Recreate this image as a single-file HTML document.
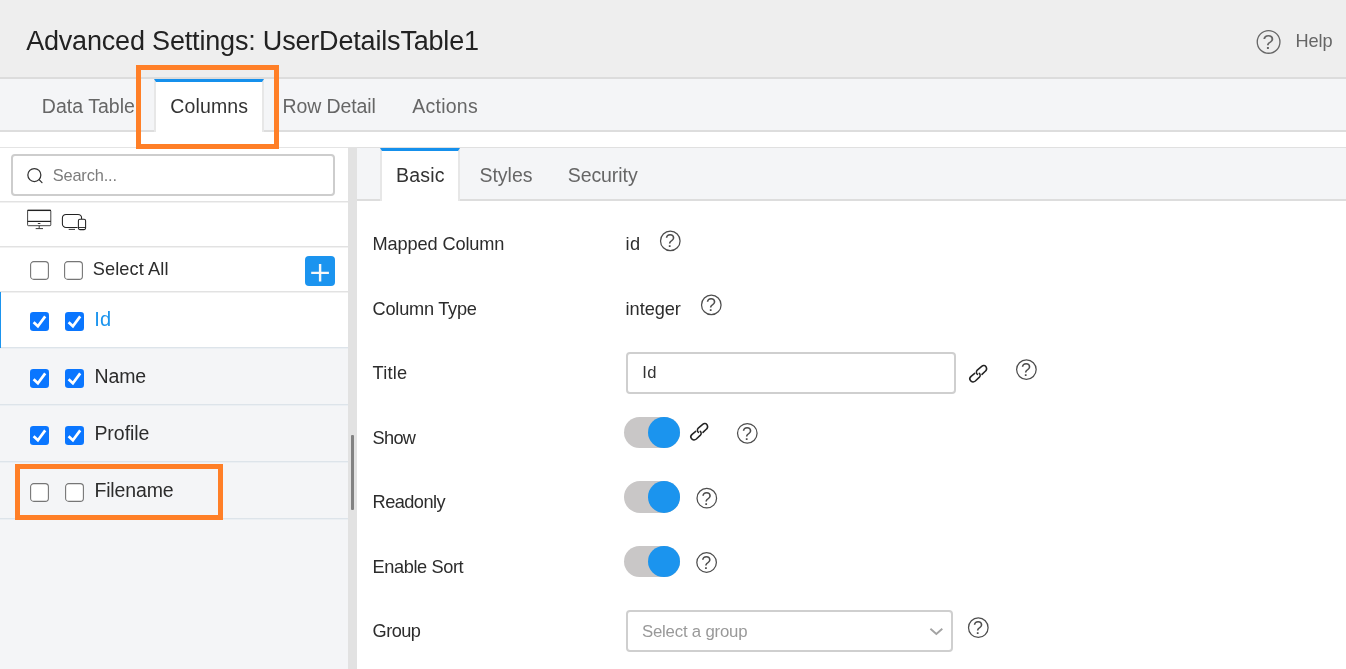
<!DOCTYPE html>
<html lang="en"><head><meta charset="utf-8"><title>Advanced Settings: UserDetailsTable1</title>
<style>
html,body{margin:0;padding:0}
body{width:1346px;height:669px;position:relative;overflow:hidden;background:#fff;
 font-family:"Liberation Sans",sans-serif;}
.t{position:absolute;white-space:nowrap;display:block;will-change:transform}
.a{position:absolute;display:block;overflow:visible}
.hdr{position:absolute;left:0;top:0;width:1346px;height:77px;background:#eeeeee;border-bottom:2px solid #dcdcdc}
.tabbar{position:absolute;left:0;top:79px;width:1346px;height:51px;background:#f4f5f7;border-bottom:2px solid #dddddd}
.tab-active{position:absolute;box-sizing:border-box;background:#fff;border-top:3px solid #1590ec;border-left:2px solid #e7e7e7;border-right:2px solid #e7e7e7}
.lp{position:absolute;left:0;top:147px;width:348px;height:522px;background:#f4f5f7;border-top:1px solid #e4e4e4;box-sizing:border-box}
.lp-white{position:absolute;left:0;width:348px;background:#fff}
.hl{position:absolute;left:0;width:348px;height:2px;background:linear-gradient(#dde4ea 0,#dde4ea 50%,#ebeff3 50%,#ebeff3 100%)}
.hl.g{background:linear-gradient(#e2e2e2 0,#e2e2e2 50%,#f1f1f1 50%,#f1f1f1 100%)}
.idmark{position:absolute;left:0;top:292px;width:1px;height:56px;background:#1b94ee}
.search{position:absolute;left:11px;top:154px;width:323.5px;height:41.5px;box-sizing:border-box;border:2px solid #cdcdcd;border-radius:4px;background:#fff}
.split{position:absolute;left:348px;top:147px;width:9px;height:522px;background:#e2e2e2}
.thumb{position:absolute;left:351px;top:435px;width:3px;height:75px;background:#828282;border-radius:1px}
.rp-tabbar{position:absolute;left:357px;top:147px;width:989px;height:54px;box-sizing:border-box;background:#f4f5f7;border-top:1px solid #e0e0e0;border-bottom:2px solid #dddddd}
.inp{position:absolute;box-sizing:border-box;border:2px solid #cfcfcf;border-radius:4px;background:#fff}
.plus{position:absolute;left:305px;top:256px;width:30px;height:30px;border-radius:4px;background:#1b94ef}
.trk{position:absolute;left:623.7px;width:56.5px;height:31.8px;border-radius:16px;background:#c9c7c7}
.knob{position:absolute;left:648px;width:32.2px;height:31.8px;border-radius:50%;background:#1b94ee}
.ob{position:absolute;box-sizing:border-box;border:5px solid #ff7f27}
</style></head>
<body>
<div class="hdr"></div>
<div class="tabbar"></div>
<div class="tab-active" style="left:154px;top:79px;width:110px;height:53px"></div>
<div class="lp"></div>
<div class="lp-white" style="top:148px;height:200px"></div>
<div class="hl g" style="top:201px"></div>
<div class="hl g" style="top:246px"></div>
<div class="hl g" style="top:291px"></div>
<div class="hl" style="top:347px"></div>
<div class="hl" style="top:404px"></div>
<div class="hl" style="top:461px"></div>
<div class="hl" style="top:518px"></div>
<div class="idmark"></div>
<div class="search"></div>
<div class="split"></div><div class="thumb"></div>
<div class="rp-tabbar"></div>
<div class="tab-active" style="left:380px;top:148px;width:80px;height:53px"></div>
<span class="t" style="left:26px;padding-left:0.13px;top:28px;font-size:27px;line-height:27px;letter-spacing:-0.181px;color:#222;">Advanced Settings: UserDetailsTable1</span>
<span class="t" style="left:1295px;padding-left:0.54px;top:32px;font-size:18.2px;line-height:18.2px;letter-spacing:-0.139px;color:#666;">Help</span>
<span class="t" style="left:41px;padding-left:0.84px;top:97px;font-size:19.5px;line-height:19.5px;letter-spacing:0.013px;color:#666;">Data Table</span>
<span class="t" style="left:170px;padding-left:0.22px;top:97px;font-size:19.5px;line-height:19.5px;letter-spacing:0.155px;color:#333;">Columns</span>
<span class="t" style="left:282px;padding-left:0.44px;top:97px;font-size:19.5px;line-height:19.5px;letter-spacing:-0.090px;color:#666;">Row Detail</span>
<span class="t" style="left:412px;padding-left:0.25px;top:97px;font-size:19.5px;line-height:19.5px;letter-spacing:0.245px;color:#666;">Actions</span>
<span class="t" style="left:52px;padding-left:0.66px;top:167px;font-size:16.4px;line-height:16.4px;letter-spacing:-0.153px;color:#7c7c7c;">Search...</span>
<span class="t" style="left:92px;padding-left:0.78px;top:260px;font-size:18.2px;line-height:18.2px;letter-spacing:0.095px;color:#2c2c2c;">Select All</span>
<span class="t" style="left:94px;padding-left:0.30px;top:309px;font-size:20px;line-height:20px;letter-spacing:0.100px;color:#1b94ee;">Id</span>
<span class="t" style="left:94px;padding-left:0.40px;top:367px;font-size:19.5px;line-height:19.5px;letter-spacing:-0.096px;color:#2c2c2c;">Name</span>
<span class="t" style="left:94px;padding-left:0.40px;top:424px;font-size:19.5px;line-height:19.5px;letter-spacing:-0.034px;color:#2c2c2c;">Profile</span>
<span class="t" style="left:94px;padding-left:0.40px;top:481px;font-size:19.5px;line-height:19.5px;letter-spacing:-0.138px;color:#2c2c2c;">Filename</span>
<span class="t" style="left:396px;padding-left:0.04px;top:166px;font-size:19.5px;line-height:19.5px;letter-spacing:0.192px;color:#333;">Basic</span>
<span class="t" style="left:479px;padding-left:0.42px;top:166px;font-size:19.5px;line-height:19.5px;letter-spacing:0.014px;color:#666;">Styles</span>
<span class="t" style="left:567px;padding-left:0.72px;top:166px;font-size:19.5px;line-height:19.5px;letter-spacing:-0.074px;color:#666;">Security</span>
<span class="t" style="left:372px;padding-left:0.60px;top:235px;font-size:18.2px;line-height:18.2px;letter-spacing:-0.134px;color:#2c2c2c;">Mapped Column</span>
<span class="t" style="left:372px;padding-left:0.60px;top:300px;font-size:18.2px;line-height:18.2px;letter-spacing:-0.251px;color:#2c2c2c;">Column Type</span>
<span class="t" style="left:372px;padding-left:0.60px;top:364px;font-size:18.2px;line-height:18.2px;letter-spacing:0.201px;color:#2c2c2c;">Title</span>
<span class="t" style="left:372px;padding-left:0.60px;top:429px;font-size:18.2px;line-height:18.2px;letter-spacing:-0.730px;color:#2c2c2c;">Show</span>
<span class="t" style="left:372px;padding-left:0.60px;top:493px;font-size:18.2px;line-height:18.2px;letter-spacing:-0.550px;color:#2c2c2c;">Readonly</span>
<span class="t" style="left:372px;padding-left:0.60px;top:558px;font-size:18.2px;line-height:18.2px;letter-spacing:-0.400px;color:#2c2c2c;">Enable Sort</span>
<span class="t" style="left:372px;padding-left:0.60px;top:622px;font-size:18.2px;line-height:18.2px;letter-spacing:-0.556px;color:#2c2c2c;">Group</span>
<span class="t" style="left:625px;padding-left:0.60px;top:235px;font-size:18.2px;line-height:18.2px;letter-spacing:0.400px;color:#2c2c2c;">id</span>
<span class="t" style="left:625px;padding-left:0.60px;top:300px;font-size:18.2px;line-height:18.2px;letter-spacing:-0.046px;color:#2c2c2c;">integer</span>
<div class="inp" style="left:626px;top:352px;width:330px;height:42px"></div>
<span class="t" style="left:642px;padding-left:0.26px;top:365px;font-size:16.6px;line-height:16.6px;letter-spacing:0.400px;color:#333;">Id</span>
<div class="inp" style="left:626px;top:610px;width:327px;height:42px"></div>
<span class="t" style="left:641px;padding-left:0.94px;top:624px;font-size:16.8px;line-height:16.8px;letter-spacing:-0.199px;color:#999;">Select a group</span>
<svg class="a" style="left:928px;top:625.8px" width="16" height="12" viewBox="0 0 16 12"><path d="M2.4 2.7 L8.35 7.9 L14.3 2.7" fill="none" stroke="#a3a3a3" stroke-width="1.9"/></svg>
<svg class="a" style="left:30px;top:261px" width="19" height="19" viewBox="0 0 19 19"><rect x="0.6" y="0.6" width="17.8" height="17.8" rx="3.2" fill="#fff" stroke="#767676" stroke-width="1.1"/></svg>
<svg class="a" style="left:64px;top:261px" width="19" height="19" viewBox="0 0 19 19"><rect x="0.6" y="0.6" width="17.8" height="17.8" rx="3.2" fill="#fff" stroke="#767676" stroke-width="1.1"/></svg>
<svg class="a" style="left:30px;top:312px" width="19" height="19" viewBox="0 0 19 19"><rect x="0" y="0" width="19" height="19" rx="3.2" fill="#0a76ff"/><path d="M3.6 10.2 L7.9 14.3 L15.2 4.4" fill="none" stroke="#fff" stroke-width="2.7"/></svg>
<svg class="a" style="left:65px;top:312px" width="19" height="19" viewBox="0 0 19 19"><rect x="0" y="0" width="19" height="19" rx="3.2" fill="#0a76ff"/><path d="M3.6 10.2 L7.9 14.3 L15.2 4.4" fill="none" stroke="#fff" stroke-width="2.7"/></svg>
<svg class="a" style="left:30px;top:369px" width="19" height="19" viewBox="0 0 19 19"><rect x="0" y="0" width="19" height="19" rx="3.2" fill="#0a76ff"/><path d="M3.6 10.2 L7.9 14.3 L15.2 4.4" fill="none" stroke="#fff" stroke-width="2.7"/></svg>
<svg class="a" style="left:65px;top:369px" width="19" height="19" viewBox="0 0 19 19"><rect x="0" y="0" width="19" height="19" rx="3.2" fill="#0a76ff"/><path d="M3.6 10.2 L7.9 14.3 L15.2 4.4" fill="none" stroke="#fff" stroke-width="2.7"/></svg>
<svg class="a" style="left:30px;top:426px" width="19" height="19" viewBox="0 0 19 19"><rect x="0" y="0" width="19" height="19" rx="3.2" fill="#0a76ff"/><path d="M3.6 10.2 L7.9 14.3 L15.2 4.4" fill="none" stroke="#fff" stroke-width="2.7"/></svg>
<svg class="a" style="left:65px;top:426px" width="19" height="19" viewBox="0 0 19 19"><rect x="0" y="0" width="19" height="19" rx="3.2" fill="#0a76ff"/><path d="M3.6 10.2 L7.9 14.3 L15.2 4.4" fill="none" stroke="#fff" stroke-width="2.7"/></svg>
<svg class="a" style="left:30px;top:483px" width="19" height="19" viewBox="0 0 19 19"><rect x="0.6" y="0.6" width="17.8" height="17.8" rx="3.2" fill="#fff" stroke="#767676" stroke-width="1.1"/></svg>
<svg class="a" style="left:65px;top:483px" width="19" height="19" viewBox="0 0 19 19"><rect x="0.6" y="0.6" width="17.8" height="17.8" rx="3.2" fill="#fff" stroke="#767676" stroke-width="1.1"/></svg>
<div class="plus"></div>
<svg class="a" style="left:305px;top:256px" width="30" height="30" viewBox="0 0 30 30"><path d="M6.2 16.9 H23.9 M15.1 8.0 V25.6" stroke="#f8f8f8" stroke-width="2.4" fill="none"/></svg>
<svg class="a" style="left:1255px;top:28px;will-change:transform" width="27.00" height="27.00" viewBox="-13.60 -13.90 27.00 27.00"><circle cx="0" cy="0" r="11.35" fill="none" stroke="#666" stroke-width="1.3"/><text x="-0.40" y="7.34" text-anchor="middle" font-family="Liberation Sans, sans-serif" font-size="20.70" fill="#666">?</text></svg>
<svg class="a" style="left:658px;top:229px;will-change:transform" width="23.80" height="23.80" viewBox="-12.30 -11.90 23.80 23.80"><circle cx="0" cy="0" r="9.78" fill="none" stroke="#4d4d4d" stroke-width="1.25"/><text x="-0.35" y="6.36" text-anchor="middle" font-family="Liberation Sans, sans-serif" font-size="17.94" fill="#4d4d4d">?</text></svg>
<svg class="a" style="left:699px;top:293px;will-change:transform" width="23.80" height="23.80" viewBox="-12.30 -11.90 23.80 23.80"><circle cx="0" cy="0" r="9.78" fill="none" stroke="#4d4d4d" stroke-width="1.25"/><text x="-0.35" y="6.36" text-anchor="middle" font-family="Liberation Sans, sans-serif" font-size="17.94" fill="#4d4d4d">?</text></svg>
<svg class="a" style="left:1015px;top:358px;will-change:transform" width="23.80" height="23.80" viewBox="-11.40 -11.60 23.80 23.80"><circle cx="0" cy="0" r="9.78" fill="none" stroke="#4d4d4d" stroke-width="1.25"/><text x="-0.35" y="6.36" text-anchor="middle" font-family="Liberation Sans, sans-serif" font-size="17.94" fill="#4d4d4d">?</text></svg>
<svg class="a" style="left:735px;top:421px;will-change:transform" width="23.80" height="23.80" viewBox="-12.30 -12.30 23.80 23.80"><circle cx="0" cy="0" r="9.78" fill="none" stroke="#4d4d4d" stroke-width="1.25"/><text x="-0.35" y="6.36" text-anchor="middle" font-family="Liberation Sans, sans-serif" font-size="17.94" fill="#4d4d4d">?</text></svg>
<svg class="a" style="left:695px;top:486px;will-change:transform" width="23.80" height="23.80" viewBox="-11.80 -12.20 23.80 23.80"><circle cx="0" cy="0" r="9.78" fill="none" stroke="#4d4d4d" stroke-width="1.25"/><text x="-0.35" y="6.36" text-anchor="middle" font-family="Liberation Sans, sans-serif" font-size="17.94" fill="#4d4d4d">?</text></svg>
<svg class="a" style="left:695px;top:551px;will-change:transform" width="23.80" height="23.80" viewBox="-11.60 -11.50 23.80 23.80"><circle cx="0" cy="0" r="9.78" fill="none" stroke="#4d4d4d" stroke-width="1.25"/><text x="-0.35" y="6.36" text-anchor="middle" font-family="Liberation Sans, sans-serif" font-size="17.94" fill="#4d4d4d">?</text></svg>
<svg class="a" style="left:966px;top:616px;will-change:transform" width="23.80" height="23.80" viewBox="-12.30 -11.70 23.80 23.80"><circle cx="0" cy="0" r="9.78" fill="none" stroke="#4d4d4d" stroke-width="1.25"/><text x="-0.35" y="6.36" text-anchor="middle" font-family="Liberation Sans, sans-serif" font-size="17.94" fill="#4d4d4d">?</text></svg>
<div class="trk" style="top:416.7px"></div><div class="knob" style="top:416.7px"></div>
<div class="trk" style="top:480.9px"></div><div class="knob" style="top:480.9px"></div>
<div class="trk" style="top:545.7px"></div><div class="knob" style="top:545.7px"></div>
<svg class="a" style="left:964px;top:360px" width="28" height="28" viewBox="0 0 28 28"><g fill="none" stroke="#222" stroke-width="1.6" stroke-linecap="round" transform="translate(14.1 13.9) scale(0.95) translate(-14.1 -13.9)"><path d="M13.4 14.4 C12.0 13.2 11.9 11.0 13.2 9.9 L17.9 5.9 C19.5 4.6 21.6 5.0 22.5 6.6 C23.4 8.2 23.2 9.8 21.9 10.9 L18.2 14.4"/><path d="M10.5 13.3 L6.7 16.5 C5.2 17.8 5.0 19.8 6.2 21.2 C7.4 22.6 9.6 22.8 11.2 21.4 L15.5 17.3 C16.7 16.1 16.5 14.4 15.3 13.4"/></g></svg>
<svg class="a" style="left:684.8px;top:418.1px" width="28" height="28" viewBox="0 0 28 28"><g fill="none" stroke="#222" stroke-width="1.6" stroke-linecap="round" transform="translate(14.1 13.9) scale(0.95) translate(-14.1 -13.9)"><path d="M13.4 14.4 C12.0 13.2 11.9 11.0 13.2 9.9 L17.9 5.9 C19.5 4.6 21.6 5.0 22.5 6.6 C23.4 8.2 23.2 9.8 21.9 10.9 L18.2 14.4"/><path d="M10.5 13.3 L6.7 16.5 C5.2 17.8 5.0 19.8 6.2 21.2 C7.4 22.6 9.6 22.8 11.2 21.4 L15.5 17.3 C16.7 16.1 16.5 14.4 15.3 13.4"/></g></svg>
<svg class="a" style="left:26px;top:208px" width="28" height="23" viewBox="0 0 28 23">
<g fill="none" stroke="#222">
<rect x="1.6" y="2.3" width="23.2" height="15.4" rx="0.8" stroke-width="0.85"/>
<path d="M1.4 2.4 H25" stroke-width="1.3"/>
<path d="M1.6 13.4 H24.8" stroke-width="1.2"/>
<path d="M13.2 17.8 V20.4 M9.7 20.6 H17" stroke-width="0.9"/>
</g><ellipse cx="13.1" cy="15.5" rx="1.5" ry="0.5" fill="#222"/></svg>
<svg class="a" style="left:60px;top:212px" width="28" height="20" viewBox="0 0 28 20">
<g fill="none" stroke="#222" stroke-width="1.05">
<path d="M17.6 15.5 H6 a3.6 3.6 0 0 1 -3.6 -3.6 V6 a3.6 3.6 0 0 1 3.6 -3.6 H18 a3.6 3.6 0 0 1 3.6 3.6 V7"/>
<path d="M8.7 17.4 H15" stroke-width="0.9"/>
<rect x="18.4" y="7.3" width="7.2" height="10.3" rx="1.5"/>
<path d="M18.4 15.5 H25.6" stroke-width="0.9"/>
</g></svg>
<svg class="a" style="left:25px;top:165px" width="20" height="20" viewBox="0 0 20 20">
<g fill="none" stroke="#333" stroke-width="1.25"><circle cx="9.35" cy="10" r="6.5"/><path d="M14.1 14.6 L17.0 17.6" stroke-linecap="round"/></g></svg>
<div class="ob" style="left:136px;top:65px;width:143px;height:84px"></div>
<div class="ob" style="left:15px;top:464px;width:208px;height:55.5px"></div>
</body></html>
